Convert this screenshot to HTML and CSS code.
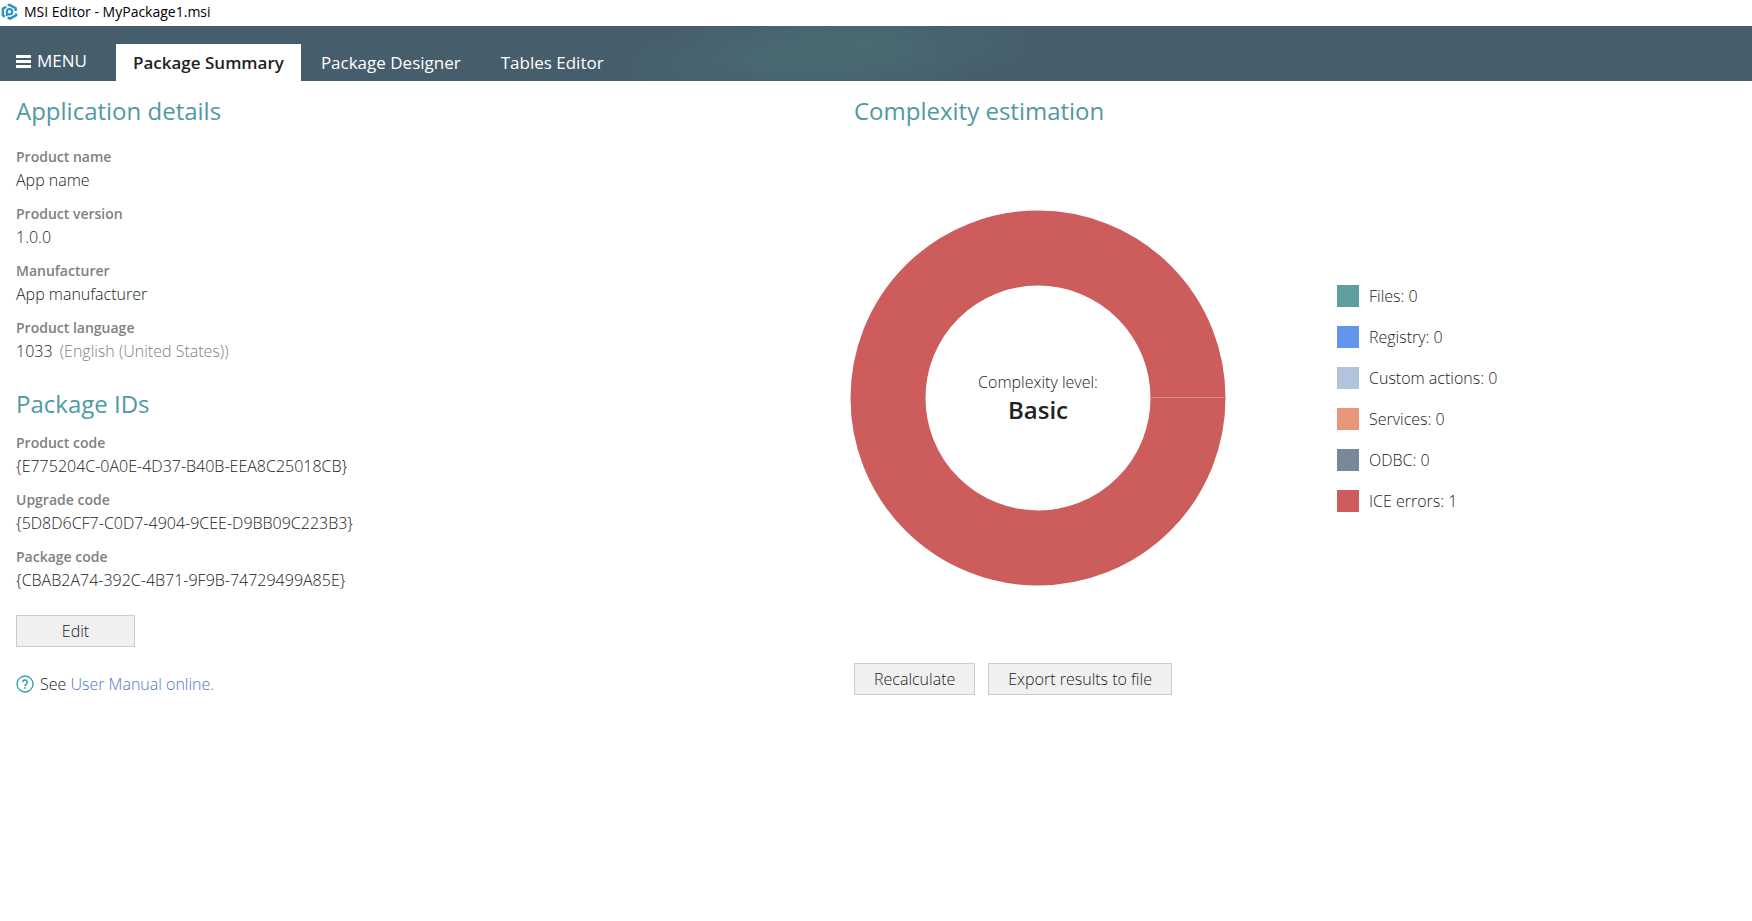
FILE: index.html
```
<!DOCTYPE html>
<html lang="en">
<head>
    <meta charset="UTF-8">
    <meta name="viewport" content="width=device-width, initial-scale=1.0">
    <title>MSI Editor - MyPackage1.msi</title>
    <link rel="stylesheet" href="styles.css">
</head>
<body>

    <!-- Window title -->
    <div class="titlebar">
        <svg class="app-icon" viewBox="0 0 18 18" fill="none" stroke="#2b93be" stroke-width="2.600">
            <path d="M5.500 3.500L2 5.500V12.500L4 14"/>
            <path d="M7 2L9 1.500L15.500 5V8"/>
            <path d="M16 10.500V12.500L9.500 16L7 15"/>
            <circle cx="9" cy="8.800" r="2.900" stroke-width="2.200"/>
            <path d="M6.200 9v4.500" stroke-width="2"/>
        </svg>
        <span>MSI Editor - MyPackage1.msi</span>
    </div>

    <!-- Tabs -->
    <header class="ribbon">
        <button class="menu-button" type="button">
            <svg class="menu-icon" viewBox="0 0 15 13" fill="#fff">
                <path d="M0 0h15v3H0zM0 5h15v3H0zM0 10h15v3H0z"/>
            </svg>
            MENU
        </button>
        <nav class="tabs">
            <a class="tab active" href="#summary">Package Summary</a>
            <a class="tab" href="#designer">Package Designer</a>
            <a class="tab" href="#tables">Tables Editor</a>
        </nav>
    </header>

    <main class="content" id="summary">
        <section class="details">
            <h2>Application details</h2>
            <dl class="fields">
                <dt>Product name</dt>
                <dd>App name</dd>
                <dt>Product version</dt>
                <dd>1.0.0</dd>
                <dt>Manufacturer</dt>
                <dd>App manufacturer</dd>
                <dt>Product language</dt>
                <dd>1033 <span class="hint">(English (United States))</span></dd>
            </dl>

            <h2>Package IDs</h2>
            <dl class="fields ids">
                <dt>Product code</dt>
                <dd>{E775204C-0A0E-4D37-B40B-EEA8C25018CB}</dd>
                <dt>Upgrade code</dt>
                <dd>{5D8D6CF7-C0D7-4904-9CEE-D9BB09C223B3}</dd>
                <dt>Package code</dt>
                <dd>{CBAB2A74-392C-4B71-9F9B-74729499A85E}</dd>
            </dl>
            <button class="btn edit" type="button">Edit</button>

            <p class="help">
                <svg class="help-icon" viewBox="0 0 18 18" fill="none" stroke="#2a9fa8">
                    <circle cx="9" cy="9" r="8" stroke-width="1.300"/>
                    <path d="M6.700 7.300a2.300 2.300 0 1 1 3.500 1.900c-.8.500-1.200.8-1.200 1.700" stroke-width="1.500"/>
                    <path d="M9 12.200v1.600" stroke-width="1.600"/>
                </svg>
                <span>See <a href="#manual">User Manual online.</a></span>
            </p>
        </section>

        <section class="complexity">
            <h2>Complexity estimation</h2>
            <div class="chart-row">
                <div class="donut">
                    <svg class="ring" viewBox="0 0 376 376">
                        <circle cx="188" cy="188" r="150" fill="none" stroke="#cd5c5c" stroke-width="75"/>
                        <path d="M300 187.500h76" stroke="#dc8c8c"/>
                    </svg>
                    <div class="level">
                        <span>Complexity level:</span>
                        <strong>Basic</strong>
                    </div>
                </div>
                <ul class="legend">
                    <li><span class="swatch files"></span>Files: 0</li>
                    <li><span class="swatch registry"></span>Registry: 0</li>
                    <li><span class="swatch actions"></span>Custom actions: 0</li>
                    <li><span class="swatch services"></span>Services: 0</li>
                    <li><span class="swatch odbc"></span>ODBC: 0</li>
                    <li><span class="swatch ice"></span>ICE errors: 1</li>
                </ul>
            </div>
            <div class="actions-row">
                <button class="btn" type="button">Recalculate</button>
                <button class="btn" type="button">Export results to file</button>
            </div>
        </section>
    </main>

</body>
</html>
```
FILE: styles.css
```
* { box-sizing: border-box; }
body { margin: 0; background: #fff; color: #222; font: 300 16px/24px "Open Sans", "Noto Sans", sans-serif; }
h2 { margin: 0; color: #5199a3; font-size: 24px; font-weight: 400; line-height: 32px; }

/* Title and tabs */
.titlebar { display: flex; align-items: center; gap: 6px; height: 26px; padding: 0 1px 2px; color: #000; font-size: 14px; font-weight: 400; }
.app-icon { width: 17px; height: 18px; }
.ribbon {
    display: flex;
    align-items: flex-end;
    height: 55px;
    background:
        radial-gradient(ellipse 190px 50px at 780px 38px, rgba(78, 125, 123, 0.3), transparent),
        radial-gradient(ellipse 190px 50px at 870px 18px, rgba(78, 125, 123, 0.35), transparent),
        #465d6b;
}
.menu-button { display: flex; align-items: center; gap: 6px; width: 116px; height: 38px; padding: 0 0 2px 16px; border: 0; background: none; color: #fff; font: 400 17px/24px "Open Sans", "Noto Sans", sans-serif; }
.menu-icon { width: 15px; height: 13px; }
.tabs { display: flex; }
.tab { height: 37px; padding: 0 20px; color: #fff; font-size: 17px; font-weight: 400; line-height: 37px; text-decoration: none; }
.tab.active { padding: 0 17px; background: #fff; color: #222; font-weight: 600; }

/* Columns */
.content { display: grid; grid-template-columns: 838px 1fr; padding: 14px 16px; }

/* Details */
.fields { margin: 19px 0 25px; }
.fields dt { color: #808080; font-size: 14px; font-weight: 600; line-height: 22px; }
.fields dd { margin: 0 0 11px; line-height: 24px; }
.fields.ids { margin: 12px 0 23px; }
.hint { margin-left: 3px; color: #808080; }
.btn { height: 32px; padding: 0 19px; border: 1px solid #ccc; background: #f0f0f0; color: #222; font: 300 16px/24px "Open Sans", "Noto Sans", sans-serif; }
.edit { width: 119px; }
.help { display: flex; align-items: center; gap: 6px; margin: 25px 0 0; }
.help-icon { width: 18px; height: 18px; }
.help a { color: #4f78c4; text-decoration: none; }

/* Complexity */
.chart-row { display: flex; align-items: center; gap: 111px; margin: 83px 0 77px -4px; }
.donut { display: grid; width: 376px; height: 376px; }
.ring, .level { grid-area: 1 / 1; }
.level { display: flex; flex-direction: column; align-items: center; justify-content: center; }
.level strong { color: #222; font-size: 24px; font-weight: 600; line-height: 32px; }
.legend { display: grid; gap: 17px; margin: 0; padding: 0; list-style: none; }
.legend li { display: flex; align-items: center; gap: 10px; }
.swatch { width: 22px; height: 22px; }
.files { background: #5f9ea0; }
.registry { background: #6495ed; }
.actions { background: #b0c4de; }
.services { background: #e9967a; }
.odbc { background: #778899; }
.ice { background: #cd5c5c; }
.actions-row { display: flex; gap: 13px; }
```
